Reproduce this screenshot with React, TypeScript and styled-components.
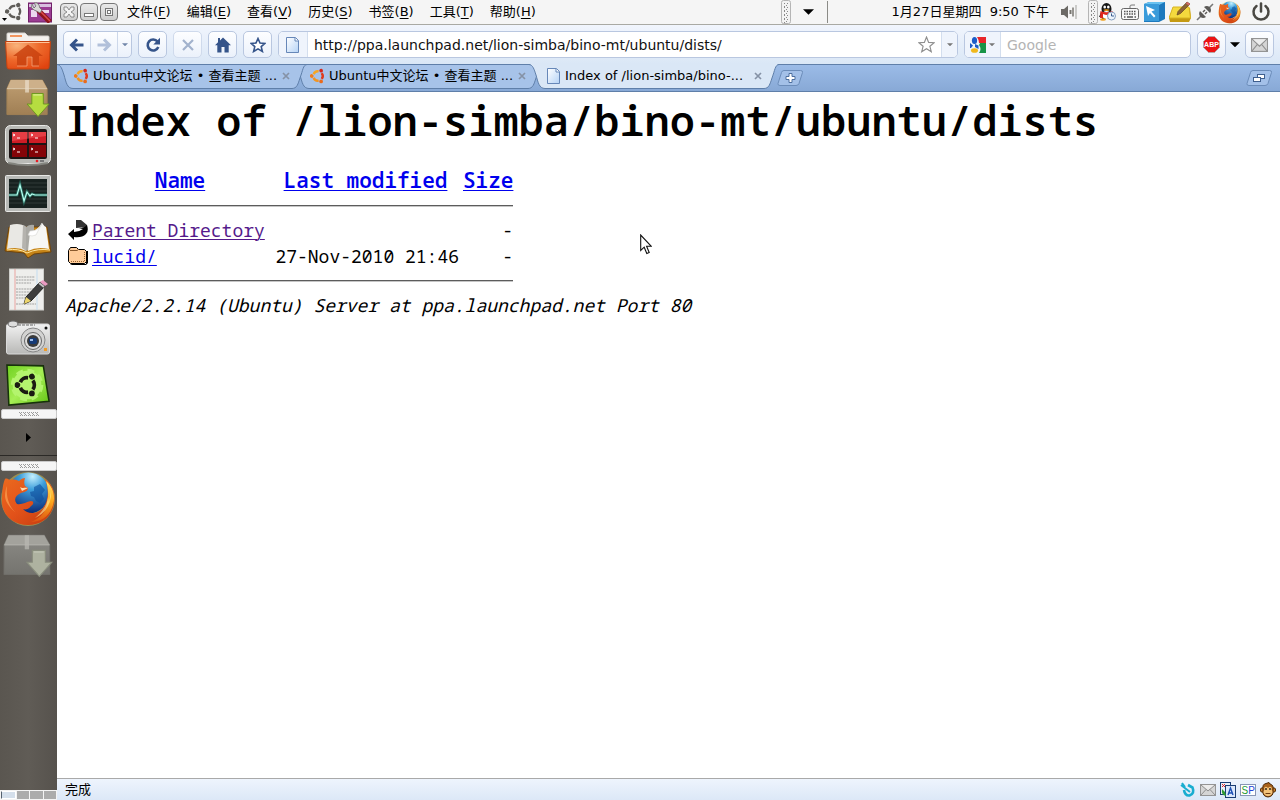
import React from "react";
import styled, { createGlobalStyle, css } from "styled-components";

const ui = `"DejaVu Sans", "Noto Sans CJK SC", sans-serif`;
const mono = `"Noto Sans Mono", "DejaVu Sans Mono", monospace`;

const GlobalStyle = createGlobalStyle`
  *, *::before, *::after { box-sizing: border-box; }
  body { margin: 0; background: #fff; color: #000; font: 13px/18px ${ui}; }
  button { margin: 0; padding: 0; border: 0; background: none; color: inherit; font: inherit; }
  svg { display: block; flex: none; }
`;

const Desktop = styled.div`
  display: flex;
  flex-direction: column;
  min-height: 100vh;
`;

/* ---------- top panel ---------- */
const Panel = styled.header`
  display: flex;
  align-items: center;
  height: 25px;
  background: #f5f5f5;
  border-bottom: 1px solid #a9a9a3;
`;
const PanelButton = styled.button<{ $w: number }>`
  display: flex;
  align-items: center;
  justify-content: center;
  flex: none;
  width: ${(p) => p.$w}px;
  height: 24px;
`;
const WindowButtons = styled.div`
  display: flex;
  gap: 2px;
  padding: 0 1px 0 6px;
`;
const WindowButton = styled.button`
  display: flex;
  align-items: center;
  justify-content: center;
  width: 18px;
  height: 18px;
  border: 1px solid #777;
  border-radius: 4px;
  background: linear-gradient(#e9e9e9, #cdcdcd);
`;
const MenuBar = styled.nav`
  display: flex;
`;
const MenuItem = styled.button`
  padding: 0 8px;
  white-space: nowrap;
  u { text-underline-offset: 2px; }
`;
const PanelRight = styled.div`
  display: flex;
  align-items: center;
  margin-left: auto;
`;
const PanelDivider = styled.div`
  width: 1px;
  height: 22px;
  background: #8b8b87;
`;
const Clock = styled.time`
  margin: 0 11px 0 64px;
  white-space: pre;
`;
const Tray = styled.div`
  display: flex;
  align-items: center;
  margin-left: 10px;
`;

/* ---------- body: dock and browser ---------- */
const Workspace = styled.div`
  display: flex;
  flex: 1;
`;
const Dock = styled.aside`
  display: flex;
  flex-direction: column;
  align-items: center;
  flex: none;
  width: 57px;
  background: linear-gradient(90deg, #5a5650, #605c56 50%, #56524d);
`;
const Launcher = styled.button<{ $h: number }>`
  display: flex;
  align-items: center;
  justify-content: center;
  width: 57px;
  height: ${(p) => p.$h}px;
  padding-right: 1px;
`;
const Grip = styled.div`
  display: flex;
  align-items: center;
  justify-content: center;
  width: 56px;
  height: 10px;
  border: 1px solid #c9c9c9;
  border-radius: 2px;
  background: #f5f5f5;
`;
const DockFolder = styled.button`
  display: flex;
  align-items: center;
  justify-content: center;
  width: 100%;
  height: 37px;
  margin-bottom: 5px;
  border-bottom: 1px solid #2b2926;
`;
const Pager = styled.div`
  display: flex;
  gap: 1px;
  width: 100%;
  height: 10px;
  margin-top: auto;
  padding: 1px;
  background: #f4f4f4;
`;
const PagerCell = styled.button<{ $on?: boolean }>`
  flex: 1;
  background: #acacac;
  ${(p) => p.$on && css`background: #d4dfeb; border: 1px solid #fff; border-left-color: #54616e;`}
`;
const Browser = styled.main`
  display: flex;
  flex: 1;
  flex-direction: column;
  min-width: 0;
`;

/* ---------- browser toolbar ---------- */
const Toolbar = styled.div`
  display: flex;
  align-items: center;
  gap: 6px;
  height: 39px;
  padding: 0 6px;
  background: linear-gradient(#f1f5fd, #dae7f6);
`;
const frame = css`
  height: 27px;
  border: 1px solid #b9c7e0;
  border-radius: 5px;
  background: linear-gradient(#fdfeff, #ebf1fb);
`;
const NavGroup = styled.div`
  ${frame}
  display: flex;
  width: 69px;
`;
const NavPart = styled.button<{ $w: number; $line?: boolean }>`
  display: flex;
  align-items: center;
  justify-content: center;
  width: ${(p) => p.$w}px;
  border-right: ${(p) => (p.$line ? "1px solid #cdd8ea" : "0")};
`;
const ToolButton = styled.button<{ $faded?: boolean }>`
  ${frame}
  display: flex;
  align-items: center;
  justify-content: center;
  flex: none;
  width: 29px;
  ${(p) => p.$faded && css`border-color: #cfdaec;`}
`;
const Field = styled.form<{ $fixed?: boolean }>`
  ${frame}
  display: flex;
  overflow: hidden;
  background: #fff;
  ${(p) => (p.$fixed ? css`flex: 0 0 227px;` : css`flex: 1;`)}
`;
const FieldEnd = styled.button<{ $w: number; $side?: "left" | "right" }>`
  display: flex;
  align-items: center;
  justify-content: center;
  gap: 3px;
  flex: none;
  width: ${(p) => p.$w}px;
  ${(p) => p.$side === "left" && css`background: #eff4fc; border-right: 1px solid #d3deee;`}
  ${(p) => p.$side === "right" && css`background: #eff4fc; border-left: 1px solid #d3deee;`}
`;
const FieldInput = styled.input`
  flex: 1;
  min-width: 0;
  padding: 0 6px;
  border: 0;
  outline: 0;
  background: transparent;
  color: #111;
  font: 14px/18px ${ui};
  &::placeholder { color: #b4b4b4; opacity: 1; }
`;
const ArrowButton = styled.button`
  display: flex;
  justify-content: center;
  width: 15px;
  margin: 0 -3px 0 -5px;
`;

/* ---------- tabs ---------- */
const TabStrip = styled.div`
  display: flex;
  height: 28px;
  border-top: 1px solid #5f7fa9;
  border-bottom: 1px solid #5f7fa9;
  background: linear-gradient(#9bbbe7, #88a9d6);
`;
const Tab = styled.div<{ $z: number }>`
  position: relative;
  z-index: ${(p) => p.$z};
  display: flex;
  flex: 0 1 250px;
  height: 25px;
  min-width: 0;
  margin: -1px -14px 0 0;
  padding: 0 17px;
`;
const TabShape = styled.svg`
  position: absolute;
  inset: 0;
  width: 100%;
  height: 100%;
`;
const TabContent = styled.div`
  position: relative;
  display: flex;
  align-items: center;
  gap: 3px;
  width: 100%;
  height: 24px;
`;
const TabTitle = styled.button`
  flex: 1;
  overflow: hidden;
  text-align: left;
  white-space: nowrap;
`;
const StripButton = styled.button<{ $end?: boolean }>`
  align-self: center;
  margin-left: ${(p) => (p.$end ? "auto" : "12px")};
  margin-right: 7px;
`;

/* ---------- directory page ---------- */
const Page = styled.article`
  flex: 1;
  padding: 4px 8px 0;
  overflow: hidden;
  background: #fff;
  font: 18px/24px ${mono};
`;
const Title = styled.h1`
  margin: 0 0 22px;
  font-size: 42px;
  font-weight: 600;
  line-height: 48px;
  white-space: nowrap;
`;
const Listing = styled.table`
  width: 451px;
  table-layout: fixed;
  border-spacing: 2px;
  th, td { padding: 0 1px; white-space: nowrap; }
  th { height: 25px; font-size: 21px; font-weight: 600; vertical-align: top; }
  td { height: 24px; }
  hr { height: 2px; margin: 0; border: 0; border-top: 1px solid #5c5c5c; border-bottom: 1px solid #c6c6c6; }
`;
const RuleCell = styled.td`
  && { height: 21px; }
`;
const Num = styled.td`
  text-align: right;
`;
const Link = styled.a<{ $seen?: boolean }>`
  color: ${(p) => (p.$seen ? "#551a8b" : "#0000ee")};
  text-decoration-thickness: 1px;
  text-underline-offset: 2px;
`;
const Server = styled.address`
  font-style: italic;
`;

const StatusBar = styled.footer`
  display: flex;
  align-items: center;
  gap: 4px;
  height: 22px;
  padding: 0 4px 0 8px;
  border-top: 1px solid #a9a9a9;
  background: linear-gradient(#eef4fd, #dce8f7);
  line-height: 16px;
  span { flex: 1; }
`;
const StatusButton = styled.button`
  display: flex;
  justify-content: center;
  width: 16px;
`;
const Pointer = styled.svg`
  position: absolute;
  left: 50%;
  top: 234px;
  pointer-events: none;
`;

/* ---------- drawings ---------- */
const UbuntuMark = ({ size, arcs, dots, ring = 3 }: { size: number; arcs: string[]; dots: string[]; ring?: number }) => (
  <svg width={size} height={size} viewBox="0 0 20 20">
    {[0, 120, 240].map((a, i) => (
      <g key={a} transform={`rotate(${a} 10 10)`}>
        <path d="M14.600 6.400A5.800 5.800 0 0 1 14.600 13.600" fill="none" stroke={arcs[i]} strokeWidth={ring} />
        <circle cx="13.900" cy="16.800" r="2.300" fill={dots[i]} />
      </g>
    ))}
  </svg>
);

const Down = ({ c = "#000", w = 11 }: { c?: string; w?: number }) => (
  <svg width={w} height={w / 2 + 0.5} viewBox="0 0 10 5"><path d="M0 0H10L5 5Z" fill={c} /></svg>
);

const Doc = () => (
  <svg width="16" height="16" viewBox="-1 0 16 16">
    <defs><linearGradient id="doc" x1="0" y1="0" x2="1" y2="1"><stop stopColor="#fff" /><stop offset="1" stopColor="#b5d3f6" /></linearGradient></defs>
    <path d="M.5 .5H9.500L12.500 3.500V15.500H.5Z" fill="url(#doc)" stroke="#6687b8" />
    <path d="M9 1V4H12.500" fill="#fff" stroke="#6687b8" />
  </svg>
);

const VGrip = () => (
  <svg width="10" height="24" viewBox="0 0 10 24">
    <rect x=".5" y=".5" width="9" height="23" rx="2" fill="#f3f3f3" stroke="#b5b5b5" />
    {[3, 7, 11, 15, 19].map((y) => (
      <path key={y} d={`M3 ${y}h1v1h-1zM5 ${y + 2}h1v1h-1zM6 ${y}h1v1h-1zM3 ${y + 3}h1v1h-1z`} fill="#888" />
    ))}
  </svg>
);

const HDots = () => (
  <svg width="20" height="5" viewBox="0 0 20 5">
    {[0, 4, 8, 12, 16].map((x) => (
      <path key={x} d={`M${x} 0h1v1h-1zM${x + 2} 0h1v1h-1zM${x + 1} 1h1v1h-1zM${x + 2} 2h1v1h-1zM${x + 1} 3h1v1h-1zM${x + 3} 3h1v1h-1z`} fill="#9a9a9a" />
    ))}
  </svg>
);

const Firefox = ({ size, id }: { size: number; id: string }) => (
  <svg width={size} height={size} viewBox="0 0 56 56">
    <defs>
      <radialGradient id={id + "b"} cx=".6" cy=".1" r=".9"><stop stopColor="#c4f0ff" /><stop offset=".35" stopColor="#3d9edb" /><stop offset="1" stopColor="#0a2a78" /></radialGradient>
      <linearGradient id={id + "o"} x1="0" y1="0" x2="1" y2="1"><stop stopColor="#ea6a1f" /><stop offset=".5" stopColor="#e2521a" /><stop offset="1" stopColor="#c23a0e" /></linearGradient>
      <linearGradient id={id + "y"} x1="0" y1="0" x2="0" y2="1"><stop stopColor="#ffe36b" /><stop offset=".5" stopColor="#fba71c" /><stop offset="1" stopColor="#dc5312" /></linearGradient>
    </defs>
    <circle cx="28" cy="28" r="27" fill="#d9c34f" opacity=".5" />
    <circle cx="28.500" cy="22" r="20.500" fill={`url(#${id}b)`} />
    <path d="M34 16L40 13L45 19L42 23L44 28L40 32L36 30L34 26L31 25L30 21L34 20Z" fill="#0d4c9b" opacity=".6" />
    <path d="M45 8C52 13 56 22 54 32C52 46 42 54 28 54C12 54 1 43 2 28C2 20 3 12 5 8C6 7 8 8 10 9C14 8 17 9 19 10C21 8 23 7 25 7C24 10 24 13 25 15L28 17C28 20 25 21 21 22C16 24 13 28 17 33C22 34 26 31 31 30C34 30 34 33 31 35C29 38 26 39 23 38C28 44 38 43 43 37C49 29 49 18 45 8Z" fill={`url(#${id}o)`} />
    <path d="M46 10C52 15 56 24 53 34C50 45 41 51 31 51C41 47 46 41 47 32C49 24 48 16 46 10Z" fill={`url(#${id}y)`} />
    <path d="M51 20C52 32 46 42 35 47C43 40 47 34 48 26L49 31Z" fill="#fff09a" opacity=".6" />
    <path d="M7 15C6 24 8 34 15 41C11 38 5 31 5 25C5 21 6 17 7 15Z" fill="#ffae5b" opacity=".6" />
    <path d="M20 16C23 18 25 16 28 17L22 20Z" fill="#fbdcb4" />
  </svg>
);

const Package = ({ gray }: { gray?: boolean }) => {
  const c = gray ? ["#a3a29c", "#8b8a85", "#75746f", "#b8b7b1"] : ["#cdb08a", "#c09f73", "#a07f54", "#e9dcc8"];
  const id = gray ? "pkg-gray" : "pkg-tan";
  const w = gray ? 52 : 46;
  return (
    <svg width={w} height={w * 0.88} viewBox="0 0 48 42">
      <defs><linearGradient id={id} x1="0" y1="0" x2="0" y2="1"><stop stopColor={c[1]} /><stop offset="1" stopColor={c[2]} /></linearGradient></defs>
      <path d="M6 1H39L44 10V37H2V10Z" fill={`url(#${id})`} stroke={c[2]} />
      <path d="M6 1H39L44 10H2Z" fill={c[0]} />
      <path d="M2 10H44" stroke={c[3]} strokeWidth=".7" />
      <path d="M21 1H25V14H21Z" fill={c[3]} opacity=".75" />
      <path d="M28 15H40V26H46L34.500 39L23 26H28Z" fill={gray ? "#aeb2a0" : "#b6dc40"} stroke={gray ? "#898d7d" : "#6d9820"} />
      <path d="M29.500 16.500H38.500" stroke={gray ? "#c5c8ba" : "#e5f5a6"} />
    </svg>
  );
};

const HomeFolder = () => (
  <svg width="46" height="38" viewBox="0 0 46 38">
    <defs><radialGradient id="home" cx=".25" cy=".15" r="1"><stop stopColor="#f9b27a" /><stop offset=".5" stopColor="#ee6a2c" /><stop offset="1" stopColor="#e0430f" /></radialGradient></defs>
    <path d="M2 10V2Q2 1 3 1H20L23 4H43Q44 4 44 5V11Z" fill="#f4f1ee" stroke="#d8d4d0" />
    <path d="M5 3H17V5H5Z" fill="#f2955f" />
    <path d="M.5 9.500H45.500L44 35Q44 37 42 37H4Q2 37 2 35Z" fill="url(#home)" stroke="#c5420f" />
    <path d="M1.500 10.500H44.500" stroke="#ffc59b" />
    <path d="M23 12.500L38 24H34V34H27V25H22V34H12V24H8Z" fill="#c9420f" opacity=".85" />
    <path d="M12 34H22V25H27V34H34" fill="none" stroke="#f4a27a" strokeWidth=".8" />
  </svg>
);

const Terminal = () => (
  <svg width="46" height="41" viewBox="0 0 46 41">
    <rect x=".5" y=".5" width="45" height="38" rx="5" fill="#b9bab6" stroke="#e8e8e6" />
    <path d="M3 38Q23 42 43 38" stroke="#84857f" fill="none" strokeWidth="2" />
    <rect x="4" y="4" width="38" height="30" rx="2" fill="#1c1414" />
    <path d="M7 7H22V18H7ZM24 7H41V18H24Z" fill="#cf1d26" />
    <path d="M7 20H22V32H7ZM24 20H41V32H24Z" fill="#840408" />
    <path d="M7 7H41V11L7 16Z" fill="#ff686b" opacity=".45" />
    <path d="M8 9l2 1-2 1M12 13h3M26 9l2 1-2 1M30 13h3M8 23l2 1-2 1M12 27h3M26 23l2 1-2 1M30 27h3" stroke="#fff" fill="none" />
    <circle cx="32" cy="36" r="1.300" fill="#ea1c24" /><path d="M35 35H39V37H35Z" fill="#777" />
  </svg>
);

const Monitor = () => (
  <svg width="46" height="38" viewBox="0 0 46 38">
    <rect x=".5" y=".5" width="45" height="36" rx="1" fill="#b8bab7" stroke="#e8e8e6" />
    <rect x="4" y="4" width="38" height="29" fill="#17211f" />
    <path d="M4 8H42M4 12H42M4 16H42M4 24H42M4 28H42" stroke="#303b39" />
    <path d="M4 20H12L15 10L19 26L22 17L25 21L27 19L30 20H42" fill="none" stroke="#2b8f7c" strokeWidth="3" opacity=".6" />
    <path d="M4 20H12L15 10L19 26L22 17L25 21L27 19L30 20H42" fill="none" stroke="#b5fff0" strokeWidth="1.200" />
  </svg>
);

const Book = () => (
  <svg width="48" height="38" viewBox="0 0 48 38">
    <path d="M5 5L1 29L20 31L24 36L30 32L47 30L43 5Z" fill="#c68417" stroke="#6f430a" />
    <path d="M6 3Q16 0 22 5V29Q14 24 3 27Z" fill="#e9e8e4" />
    <path d="M19 3Q22 4 22 5V29Q20 27 18 26Z" fill="#b5b3ae" />
    <path d="M22 5Q26 2 30 3V26Q26 26 22 29Z" fill="#aaa9a4" />
    <path d="M26 10Q34 8 38 1Q40 4 42 5L45 27Q33 24 24 29Z" fill="#f7f7f4" />
    <path d="M24 13Q28 15 32 13L38 1Q36 9 26 9Z" fill="#fff" stroke="#d5d5d0" strokeWidth=".6" />
    <path d="M3 28Q14 26 23 31Q34 26 46 28" stroke="#ffe7a0" fill="none" />
  </svg>
);

const TextEditor = () => (
  <svg width="42" height="43" viewBox="0 0 42 43">
    <rect x="2.500" y="1" width="34" height="41" fill="#eeeeec" stroke="#cfcfcb" />
    <path d="M8 1V42" stroke="#eaa4a0" /><path d="M30 1V42" stroke="#c3dcf0" />
    <path d="M9 9H28M9 12H28M9 15H24M9 21H28M9 24H27M9 27H28M9 30H23M9 36H29" stroke="#999" strokeWidth=".9" strokeDasharray="2 .7" />
    <path d="M19 29L33 14L38 18L24 33L17 36Z" fill="#3d3d3d" stroke="#222" />
    <path d="M33 14L36 12L41 16L38 18Z" fill="#ea9bc1" /><path d="M32 15L37 19" stroke="#c3c3c3" strokeWidth="2" />
    <path d="M19 29L24 33L17 36Z" fill="#ecd56c" />
  </svg>
);

const Camera = () => (
  <svg width="46" height="36" viewBox="0 0 46 36">
    <defs><linearGradient id="cam" x1="0" y1="0" x2="0" y2="1"><stop stopColor="#f2f2f2" /><stop offset="1" stopColor="#b8b8b6" /></linearGradient></defs>
    <rect x="1.500" y="4" width="43" height="30" rx="2" fill="url(#cam)" stroke="#dadada" />
    <ellipse cx="8" cy="4" rx="5" ry="3" fill="#ddd" stroke="#6c6c6c" />
    <path d="M13 5H30" stroke="#666" strokeDasharray="3 1" />
    <circle cx="28" cy="20" r="12" fill="#d3d3d2" stroke="#888" />
    <circle cx="28" cy="21" r="8.500" fill="#dcdcdc" stroke="#666" />
    <circle cx="28" cy="21" r="6" fill="#3b3b3b" />
    <rect x="24" y="18" width="8" height="6" rx="2" fill="#163b77" /><path d="M25 19h3v2h-3z" fill="#9dbbe8" />
    <circle cx="41" cy="8" r="1.500" fill="#111" /><path d="M39 28h3v3h-3z" fill="#ef9b28" />
  </svg>
);

const ink = ["#1b1b12", "#1b1b12", "#1b1b12"];
const UbuntuTweak = () => (
  <svg width="44" height="44" viewBox="0 0 46 44">
    <defs><linearGradient id="twk" x1="0" y1="0" x2="1" y2="1"><stop stopColor="#6fd01f" /><stop offset=".5" stopColor="#a6ee55" /><stop offset="1" stopColor="#62c413" /></linearGradient></defs>
    <path d="M1 1L39 2L45 39L3 43Z" fill="url(#twk)" stroke="#17320a" strokeWidth="1.600" />
    <circle cx="22" cy="22" r="15" fill="#b4f46e" stroke="#b4f46e" strokeWidth="4" strokeDasharray="7 4.780" />
    <g transform="translate(9 9)"><UbuntuMark size={26} arcs={ink} dots={ink} /></g>
  </svg>
);

const Parallelogram = ({ children }: { children: React.ReactNode }) => (
  <svg width="27" height="16" viewBox="0 0 27 16">
    <path d="M7 .5H23.500Q26 .5 25.500 2.500L22 13.500Q21.300 15.500 19 15.500H3Q.5 15.500 1 13.500L4.500 2.500Q5 .5 7 .5Z" fill="#a3c0e8" stroke="#6c8dba" />
    {children}
  </svg>
);

const Mail = ({ w, h }: { w: number; h: number }) => (
  <svg width={w} height={h} viewBox="0 0 16 12" preserveAspectRatio="none">
    <rect x=".5" y=".5" width="15" height="11" fill="#d5d5d5" stroke="#949494" />
    <path d="M1 1L8 7L15 1M1 11L6 5.500M15 11L10 5.500" fill="none" stroke="#8f8f8f" />
    <path d="M2 1H14L8 6Z" fill="#ececec" />
  </svg>
);

const TabCloseIcon = () => (
  <svg width="8" height="8" viewBox="0 0 8 8"><path d="M1 1L7 7M7 1L1 7" stroke="#8592a6" strokeWidth="1.700" /></svg>
);

const menus = [["文件", "F"], ["编辑", "E"], ["查看", "V"], ["历史", "S"], ["书签", "B"], ["工具", "T"], ["帮助", "H"]];
const tabs = [
  { title: "Ubuntu中文论坛 • 查看主题 ...", z: 2 },
  { title: "Ubuntu中文论坛 • 查看主题 ...", z: 1 },
  { title: "Index of /lion-simba/bino-...", z: 3, active: true },
];
const gray = ["#5f5d59", "#5f5d59", "#5f5d59"];

export default function App() {
  return (
    <Desktop>
      <GlobalStyle />
      <Panel>
        <PanelButton $w={26} aria-label="Applications">
          <svg width="24" height="22" viewBox="0 0 24 22">
            <g transform="translate(4 1)"><UbuntuMark size={19} arcs={gray} dots={gray} ring={2.5} /></g>
            <path d="M1 17H6L3.500 20Z" />
          </svg>
        </PanelButton>
        <PanelButton $w={28} aria-label="Preferences">
          <svg width="24" height="21" viewBox="0 0 24 21">
            <rect x=".5" y="1" width="23" height="19" fill="#9b3c93" stroke="#702068" />
            <path d="M1 2H23V5H1Z" fill="#d9bfe0" /><path d="M3 8H9V15H3ZM14 8H21V11H14Z" fill="#ecd8ef" />
            <path d="M10 8L22 20" stroke="#8d141c" strokeWidth="5" /><path d="M12 9L22 19" stroke="#dc4a4c" strokeWidth="1.500" />
            <path d="M4 2Q2 6 6 8Q9 9 12 11L14 8Q11 6 11 3Q9 0 6 1L8 4L6 6Z" fill="#d9d9d7" stroke="#6d6d6d" strokeWidth=".8" />
          </svg>
        </PanelButton>
        <WindowButtons>
          <WindowButton aria-label="Close">
            <svg width="12" height="12" viewBox="0 0 12 12"><path d="M1 1H4L6 4L8 1H11V4L8 6L11 8V11H8L6 8L4 11H1V8L4 6L1 4Z" fill="#f3f3f3" stroke="#777" strokeWidth=".8" /></svg>
          </WindowButton>
          <WindowButton aria-label="Minimize">
            <svg width="12" height="12" viewBox="0 0 12 12"><rect x="1.500" y="7.500" width="9" height="3" fill="#fff" stroke="#777" /></svg>
          </WindowButton>
          <WindowButton aria-label="Restore">
            <svg width="12" height="12" viewBox="0 0 12 12"><rect x="2.500" y="2.500" width="7" height="7" fill="#f1f1f1" stroke="#777" /><rect x="4.500" y="4.500" width="3" height="3" fill="#fff" stroke="#777" /></svg>
          </WindowButton>
        </WindowButtons>
        <MenuBar>
          {menus.map(([name, key]) => (
            <MenuItem key={key}>{name}(<u>{key}</u>)</MenuItem>
          ))}
        </MenuBar>
        <PanelRight>
          <VGrip />
          <PanelButton $w={36} aria-label="Window list"><Down /></PanelButton>
          <PanelDivider />
          <Clock>{"1月27日星期四  9:50 下午"}</Clock>
          <PanelButton $w={18} aria-label="Volume">
            <svg width="16" height="16" viewBox="0 0 16 16">
              <path d="M0 5H3L7 1.500V14.500L3 11H0Z" fill="#6b6965" /><path d="M9.500 6V10" stroke="#77756f" strokeWidth="2" /><path d="M12 3.500V12.500" stroke="#77756f" strokeWidth="1.500" /><path d="M15 1V15" stroke="#bcbcba" strokeWidth="1.500" />
            </svg>
          </PanelButton>
          <Tray>
            <VGrip />
            <PanelButton $w={19} aria-label="QQ">
              <svg width="17" height="18" viewBox="0 0 17 18">
                <path d="M2 9Q1 12 0 14Q2 14 3 13L3 16H13L14 9Z" fill="#111" />
                <ellipse cx="7.500" cy="6" rx="5" ry="6" fill="#151515" /><ellipse cx="7.500" cy="12" rx="4" ry="4" fill="#fff" />
                <ellipse cx="5.700" cy="4" rx="1.300" ry="1.600" fill="#fff" /><ellipse cx="9.300" cy="4" rx="1.300" ry="1.600" fill="#fff" />
                <path d="M4 7Q7.500 5.500 11 7Q7.500 9 4 7Z" fill="#f5a41c" /><path d="M1.500 8Q7 10.500 13.500 8L13.500 11Q8 13 4 11V15H1Z" fill="#df271d" />
                <ellipse cx="4" cy="16.500" rx="3" ry="1.300" fill="#f0a01b" />
                <circle cx="12.500" cy="13" r="4" fill="#eef4fb" stroke="#869fc0" /><path d="M12.500 10.500V13H15" fill="none" stroke="#3a5e90" />
              </svg>
            </PanelButton>
            <PanelButton $w={25} aria-label="Keyboard">
              <svg width="18" height="17" viewBox="0 0 18 17"><path d="M9 4V2Q9 1 11 1H14" fill="none" stroke="#777" /><rect x=".5" y="4.500" width="17" height="11" rx="2" fill="#f8f8f8" stroke="#666" /><path d="M3 7.500H15M3 10H15" stroke="#555" strokeWidth="1.500" strokeDasharray="1.500 1" /><path d="M3 13H4.500M6 13H12M13.500 13H15" stroke="#555" strokeWidth="1.300" /></svg>
            </PanelButton>
            <PanelButton $w={25} aria-label="Remote desktop">
              <svg width="21" height="20" viewBox="0 0 21 20"><path d="M0 2L5 0H21V17L15 20H0Z" fill="#1d79bd" /><path d="M0 2L5 0H21L15 3Z" fill="#68c1ef" /><path d="M0 2H15V19H0Z" fill="#399bda" /><path d="M2 4L11 8L7.500 9.500L11.500 14L10 15.500L6 11L4 14Z" fill="#fff" /></svg>
            </PanelButton>
            <PanelButton $w={25} aria-label="Notes">
              <svg width="22" height="22" viewBox="0 0 22 22"><path d="M4 7H21L22 17L20 21H1L0 17Z" fill="#c59a12" /><path d="M4 6H20L21.500 17H0Z" fill="#f4d93e" stroke="#d8b420" /><path d="M9 10.500L18 1L21 3L11.500 12.500L8 14Z" fill="#8c6335" stroke="#604322" strokeWidth=".7" /><path d="M18 1L21 3L20 4.500L17 2.500Z" fill="#d8686a" /></svg>
            </PanelButton>
            <PanelButton $w={25} aria-label="Network">
              <svg width="18" height="18" viewBox="0 0 18 18"><path d="M1 17L5 13M13 5L17 1" stroke="#777" strokeWidth="1.600" /><path d="M4 8L10 14Q7 16 4.500 14Q2 11 4 8Z" fill="#5c5a57" /><path d="M8 4L14 10Q16 7 14 4.500Q11 2 8 4Z" fill="#5c5a57" /><path d="M7 9L9 7M9 11L11 9" stroke="#5c5a57" strokeWidth="1.500" /></svg>
            </PanelButton>
            <PanelButton $w={25} aria-label="Firefox"><Firefox size={23} id="tray" /></PanelButton>
            <PanelButton $w={38} aria-label="Shut down">
              <svg width="20" height="20" viewBox="0 0 20 20"><path d="M5.500 4A7.500 7.500 0 1 0 14.500 4" fill="none" stroke="#4a4843" strokeWidth="2.500" strokeLinecap="round" /><path d="M10 1.500V9.500" stroke="#4a4843" strokeWidth="2.500" strokeLinecap="round" /></svg>
            </PanelButton>
          </Tray>
        </PanelRight>
      </Panel>

      <Workspace>
        <Dock>
          <Launcher $h={52} aria-label="Home folder"><HomeFolder /></Launcher>
          <Launcher $h={45} aria-label="Package installer"><Package /></Launcher>
          <Launcher $h={46} aria-label="Terminator"><Terminal /></Launcher>
          <Launcher $h={52} aria-label="System monitor"><Monitor /></Launcher>
          <Launcher $h={42} aria-label="Dictionary"><Book /></Launcher>
          <Launcher $h={54} aria-label="Text editor"><TextEditor /></Launcher>
          <Launcher $h={44} aria-label="Camera"><Camera /></Launcher>
          <Launcher $h={49} aria-label="Ubuntu Tweak"><UbuntuTweak /></Launcher>
          <Grip><HDots /></Grip>
          <DockFolder aria-label="Expand">
            <svg width="5" height="9" viewBox="0 0 5 9"><path d="M0 0L5 4.500L0 9Z" /></svg>
          </DockFolder>
          <Grip><HDots /></Grip>
          <Launcher $h={56} aria-label="Firefox"><Firefox size={56} id="dock" /></Launcher>
          <Launcher $h={60} aria-label="Downloads"><Package gray /></Launcher>
          <Pager>
            <PagerCell $on aria-label="Workspace 1" />
            <PagerCell aria-label="Workspace 2" />
            <PagerCell aria-label="Workspace 3" />
            <PagerCell aria-label="Workspace 4" />
          </Pager>
        </Dock>

        <Browser>
          <Toolbar>
            <NavGroup>
              <NavPart $w={27} $line aria-label="Back">
                <svg width="16" height="14" viewBox="0 0 16 14"><path d="M8 1.500L2.500 7L8 12.500M3 7H14.500" fill="none" stroke="#35548a" strokeWidth="3" /></svg>
              </NavPart>
              <NavPart $w={27} $line aria-label="Forward">
                <svg width="16" height="14" viewBox="0 0 16 14"><path d="M8 1.500L13.500 7L8 12.500M13 7H1.500" fill="none" stroke="#b1c0da" strokeWidth="3" /></svg>
              </NavPart>
              <NavPart $w={13} aria-label="History"><Down c="#7086a8" w={6} /></NavPart>
            </NavGroup>
            <ToolButton aria-label="Reload">
              <svg width="16" height="16" viewBox="0 0 16 16"><path d="M12.500 4.500A5.500 5.500 0 1 0 13.300 10" fill="none" stroke="#35548a" strokeWidth="2.600" /><path d="M15 .8V7.500H8.300Z" fill="#35548a" /></svg>
            </ToolButton>
            <ToolButton $faded aria-label="Stop">
              <svg width="12" height="12" viewBox="0 0 12 12"><path d="M1 1L11 11M11 1L1 11" stroke="#a2b2cd" strokeWidth="2.200" /></svg>
            </ToolButton>
            <ToolButton aria-label="Home">
              <svg width="16" height="16" viewBox="0 0 16 16"><path d="M8 .5L16 8.200H13.700V15.500H9.500V10H6.500V15.500H2.300V8.200H0L3 5.300V1H5V3.400Z" fill="#35548a" /></svg>
            </ToolButton>
            <ToolButton aria-label="Bookmark">
              <svg width="16" height="16" viewBox="0 0 16 16"><path d="M8 1.500L10 6L15 6.400L11.200 9.600L12.400 14.500L8 11.900L3.600 14.500L4.800 9.600L1 6.400L6 6Z" fill="#fff" stroke="#35548a" strokeWidth="1.600" /></svg>
            </ToolButton>
            <Field>
              <FieldEnd type="button" $w={29} $side="left" aria-label="Site identity"><Doc /></FieldEnd>
              <FieldInput aria-label="Address" defaultValue="http://ppa.launchpad.net/lion-simba/bino-mt/ubuntu/dists/" />
              <FieldEnd type="button" $w={30} aria-label="Bookmark this page">
                <svg width="17" height="17" viewBox="0 0 16 16"><path d="M8 1L10 6L15.200 6.300L11.200 9.700L12.500 14.800L8 12L3.500 14.800L4.800 9.700L.8 6.300L6 6Z" fill="#fff" stroke="#8f8f8f" strokeWidth="1.100" /></svg>
              </FieldEnd>
              <FieldEnd type="button" $w={16} $side="right" aria-label="Show history"><Down c="#777" w={6} /></FieldEnd>
            </Field>
            <Field $fixed>
              <FieldEnd type="button" $w={36} $side="left" aria-label="Search engine">
                <svg width="16" height="16" viewBox="0 0 16 16">
                  <path d="M8 0H16V6H9Q9 3 7 0Z" fill="#e8262a" /><path d="M10 6H16V16H9Q12 12 9 8Z" fill="#189447" /><ellipse cx="4.500" cy="3.500" rx="2.600" ry="3.500" fill="#1c5cc8" /><path d="M0 6L3 8.500L1 11H0Z" fill="#1c5cc8" /><path d="M5 7L8.500 8.500V12L5 10Z" fill="#1c5cc8" /><ellipse cx="4.500" cy="13.500" rx="3.500" ry="2.300" fill="#f1b81b" />
                </svg>
                <Down c="#777" w={6} />
              </FieldEnd>
              <FieldInput aria-label="Search" placeholder="Google" />
            </Field>
            <ToolButton aria-label="Adblock Plus">
              <svg width="17" height="17" viewBox="0 0 17 17"><path d="M5.500 .5H11.500L16.500 5.500V11.500L11.500 16.500H5.500L.5 11.500V5.500Z" fill="#ec1313" stroke="#b9a5a5" /><text x="8.500" y="11" textAnchor="middle" fontFamily="Liberation Sans" fontWeight="bold" fontSize="7" fill="#fff">ABP</text></svg>
            </ToolButton>
            <ArrowButton aria-label="Adblock menu"><Down w={10} /></ArrowButton>
            <ToolButton aria-label="Mail"><Mail w={17} h={14} /></ToolButton>
          </Toolbar>

          <TabStrip>
            {tabs.map((t, i) => (
              <Tab key={i} $z={t.z}>
                <TabShape viewBox="0 0 250 25" preserveAspectRatio="none" aria-hidden>
                  <path d="M0 0C4 1 5 5 7 11C9 18 10 24.500 16 24.500H235C240 24.500 241 20 243 14C246 6 246 1 250 0Z" fill={t.active ? "#dae7f6" : "#a7c3e9"} />
                  <path d="M0 .5C4 1 5 5 7 11C9 18 10 24.500 16 24.500H235C240 24.500 241 20 243 14C246 6 246 1 250 .5" fill="none" stroke="#5f7fa9" />
                  {!t.active && <path d="M0 .5H250" stroke="#5f7fa9" />}
                </TabShape>
                <TabContent>
                  {t.active ? <Doc /> : <UbuntuMark size={16} arcs={["#e03a1c", "#f4941f", "#f6a623"]} dots={["#ea6a1c", "#f07c1c", "#d6281c"]} />}
                  <TabTitle>{t.title}</TabTitle>
                  <button aria-label="Close tab"><TabCloseIcon /></button>
                </TabContent>
              </Tab>
            ))}
            <StripButton aria-label="New tab">
              <Parallelogram><path d="M12 3.500H15V6.500H18V9.500H15V12.500H12V9.500H9V6.500H12Z" fill="#fff" stroke="#4d6f9f" /></Parallelogram>
            </StripButton>
            <StripButton $end aria-label="All tabs">
              <Parallelogram><rect x="11.500" y="4.500" width="7" height="4" fill="#fff" stroke="#3f5f8e" /><rect x="7.500" y="7.500" width="7" height="4" fill="#fff" stroke="#3f5f8e" /></Parallelogram>
            </StripButton>
          </TabStrip>

          <Page>
            <Title>Index of /lion-simba/bino-mt/ubuntu/dists</Title>
            <Listing>
              <colgroup><col width="22" /><col width="178" /><col width="189" /><col width="52" /></colgroup>
              <tbody>
                <tr>
                  <th />
                  <th><Link href="#name">Name</Link></th>
                  <th><Link href="#modified">Last modified</Link></th>
                  <th><Link href="#size">Size</Link></th>
                </tr>
                <tr><RuleCell colSpan={4}><hr /></RuleCell></tr>
                <tr>
                  <td>
                    <svg width="20" height="20" viewBox="0 0 20 20"><path d="M8 0H13L19 5V8Q14 7 8 8Z" fill="#333" /><path d="M9 8Q15 9 19 5Q21 11 18 14Q14 18 6 17V20L0 14L6 9V12Q11 12 15 9Z" fill="#000" /></svg>
                  </td>
                  <td><Link $seen href="#parent">Parent Directory</Link></td>
                  <td />
                  <Num>-</Num>
                </tr>
                <tr>
                  <td>
                    <svg width="20" height="20" viewBox="0 0 20 20"><path d="M2 18H18V5H20V17L18 19H4Z" fill="#000" /><path d="M.5 4.500L2.500 1.500H8.500L10.500 3.500H16.500L18.500 5.500V15.500L16.500 17.500H2.500L.5 15.500Z" fill="#ffcc99" stroke="#000" /><path d="M2 4.500H9L10.500 3.500" fill="none" stroke="#8a5a2d" /><path d="M16.500 6V15.500H3" fill="none" stroke="#9a6632" strokeDasharray="1 1" /></svg>
                  </td>
                  <td><Link href="#lucid">lucid/</Link></td>
                  <Num>27-Nov-2010 21:46</Num>
                  <Num>-</Num>
                </tr>
                <tr><RuleCell colSpan={4}><hr /></RuleCell></tr>
              </tbody>
            </Listing>
            <Server>Apache/2.2.14 (Ubuntu) Server at ppa.launchpad.net Port 80</Server>
          </Page>

          <StatusBar>
            <span>完成</span>
            <StatusButton aria-label="Flash">
              <svg width="16" height="16" viewBox="0 0 16 16"><path d="M4 8Q5 14 9.500 13.500Q15 11.500 12.500 5.500L8 3" fill="none" stroke="#19add0" strokeWidth="2.600" /><path d="M1 3L10 10M2 1L5 5" stroke="#19add0" strokeWidth="2" /></svg>
            </StatusButton>
            <StatusButton aria-label="New mail"><Mail w={16} h={12} /></StatusButton>
            <StatusButton aria-label="Translate">
              <svg width="16" height="16" viewBox="0 0 16 16"><rect x=".5" y=".5" width="10" height="12" fill="#e9eff8" stroke="#1a3d73" /><path d="M2 2L5 5M5 2L2 5" stroke="#dc2323" /><rect x="5.500" y="3.500" width="10" height="12" fill="#dbe8fb" stroke="#1a3d73" /><path d="M8 13L10.500 6L13 13M9 11H12" fill="none" stroke="#1c4fb4" strokeWidth="1.400" /><path d="M2 7Q1 13 6 14L5 10Z" fill="#2f9b32" /></svg>
            </StatusButton>
            <StatusButton aria-label="Stylish">
              <svg width="16" height="12" viewBox="0 0 16 12"><rect x=".5" y=".5" width="15" height="11" fill="#fff" stroke="#8796b4" /><text x="1.500" y="10" fontFamily="Liberation Sans" fontSize="10" fill="#1d9a32">S<tspan fill="#2742d8">P</tspan></text></svg>
            </StatusButton>
            <StatusButton aria-label="Greasemonkey">
              <svg width="16" height="16" viewBox="0 0 16 16"><circle cx="2.500" cy="8" r="2.200" fill="#c77d2b" stroke="#5b3209" /><circle cx="13.500" cy="8" r="2.200" fill="#c77d2b" stroke="#5b3209" /><path d="M3 8Q2 2 6 1.500L9 .5L10 2Q14 3 13 8Q14 14.500 8 15Q2 14.500 3 8Z" fill="#a8621c" stroke="#4c2907" /><ellipse cx="8" cy="10" rx="4.500" ry="4" fill="#f3c37a" /><circle cx="6" cy="6.500" r="1.800" fill="#f3c37a" /><circle cx="10" cy="6.500" r="1.800" fill="#f3c37a" /><path d="M6 6V8M10 6V8" stroke="#111" strokeWidth="1.300" /><path d="M5.500 11.500H10.500" stroke="#6d3b0e" /></svg>
            </StatusButton>
          </StatusBar>
        </Browser>
      </Workspace>
      <Pointer width="12" height="21" viewBox="0 0 12 21">
        <path d="M.7 1V16.500L4.200 13.200L6.800 19.500L9.200 18.500L6.600 12.300H11.300Z" fill="#fff" stroke="#111" strokeWidth="1.100" />
      </Pointer>
    </Desktop>
  );
}
